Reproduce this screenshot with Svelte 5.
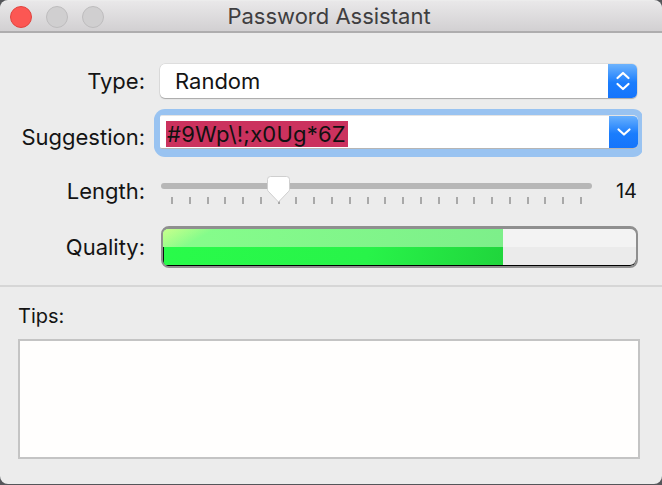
<script>
  const ticks = Array.from({ length: 24 }, (_, i) => i);
</script>

<div class="window">
  <header class="titlebar">
    <div class="lights">
      <span class="light red"></span>
      <span class="light"></span>
      <span class="light"></span>
    </div>
    <h1>Password Assistant</h1>
  </header>

  <section class="form">
    <label class="lbl type-l" for="t">Type:</label>
    <div class="select" id="t">
      <span class="value">Random</span>
      <span class="btn">
        <svg width="20" height="24" viewBox="0 0 20 24" fill="none" stroke="#fff" stroke-width="2.2" stroke-linecap="round" stroke-linejoin="round"><path d="M4.500 9 L10 4 L15.500 9"/><path d="M4.500 15 L10 20 L15.500 15"/></svg>
      </span>
    </div>

    <label class="lbl sug-l" for="s">Suggestion:</label>
    <div class="ring">
      <div class="combo" id="s">
        <span class="sel">#9Wp\!;x0Ug*6Z</span>
        <span class="btn">
          <svg width="20" height="14" viewBox="0 0 20 14" fill="none" stroke="#fff" stroke-width="2.2" stroke-linecap="round" stroke-linejoin="round"><path d="M4.500 4.500 L10 9.500 L15.500 4.500"/></svg>
        </span>
      </div>
    </div>

    <label class="lbl len-l" for="l">Length:</label>
    <div class="slider-row" id="l">
      <div class="slider">
        <div class="track"></div>
        <svg class="thumb" width="25" height="27" viewBox="0 0 25 27"><path d="M4.500 0.500 H20.500 Q23.500 0.500 23.500 3.500 V13.500 Q23.500 14.500 22.800 15.200 L12.500 26 L2.200 15.200 Q1.500 14.500 1.500 13.500 V3.500 Q1.500 0.500 4.500 0.500 Z" fill="#fff" stroke="#cfcfcf" stroke-width="1"/></svg>
        <div class="ticks">
          {#each ticks as t (t)}<i></i>{/each}
        </div>
      </div>
      <span class="num">14</span>
    </div>

    <label class="lbl qual-l" for="q">Quality:</label>
    <div class="meter" id="q">
      <div class="fill"></div>
    </div>
  </section>

  <hr />

  <section class="tips">
    <div class="tips-l">Tips:</div>
    <div class="tips-box"></div>
  </section>
</div>

<style>
  :global(body) {
    margin: 0;
    background: #55565a;
  }
  .window {
    width: 662px;
    height: 484px;
    box-sizing: border-box;
    padding-top: 1px;
    background: #ececec;
    border-radius: 8px;
    overflow: hidden;
    display: flex;
    flex-direction: column;
    font-family: Inter, "Liberation Sans", sans-serif;
    font-size: 22px;
    color: #141414;
  }
  .titlebar {
    height: 32px;
    flex: none;
    box-sizing: border-box;
    position: relative;
    display: flex;
    align-items: center;
    justify-content: center;
    background: linear-gradient(#e9e8e9, #d2d0d2);
    border-bottom: 2px solid #aeadae;
    border-radius: 8px 8px 0 0;
  }
  .lights {
    position: absolute;
    left: 10px;
    top: 5px;
    display: flex;
    gap: 14px;
  }
  .light {
    width: 20px;
    height: 20px;
    border-radius: 50%;
    background: #d0cfd0;
    border: 1px solid #bdbcbd;
  }
  .light.red {
    background: #fc5753;
    border-color: #e0443e;
  }
  h1 {
    margin: 0;
    padding-right: 4px;
    font-size: 22px;
    font-weight: 400;
    color: #3f3e40;
    line-height: 1;
  }
  .form {
    display: grid;
    grid-template-columns: 145px 478px;
    column-gap: 15px;
    align-items: start;
    padding-top: 31px;
    grid-template-rows: 51px 61px 50px 42px;
  }
  .lbl {
    text-align: right;
    line-height: 34px;
  }
  .sug-l {
    margin-top: 5px;
  }
  .len-l {
    margin-top: -2px;
  }
  .qual-l {
    margin-top: 4px;
  }
  .select,
  .combo {
    display: flex;
    height: 34px;
    box-sizing: border-box;
    background: #fff;
    border-radius: 5px;
    overflow: hidden;
    align-items: stretch;
    justify-content: space-between;
  }
  .select {
    width: 477px;
    box-shadow: 0 1px 1px #a9a9a9, 0 0 0 0.5px #d0d0d0;
  }
  .value {
    padding-left: 15px;
    line-height: 34px;
  }
  .btn {
    width: 29px;
    flex: none;
    display: flex;
    align-items: center;
    justify-content: center;
    background: linear-gradient(#6db3fd, #1a7dfd 55%, #1574fb);
  }
  .ring {
    width: 478px;
    height: 34px;
    border-radius: 5px;
    background: #99c3f1;
    box-shadow: 0 0 0 6px #99c3f1, 0 2px 0 6px #99c3f1;
    clip-path: inset(-6px -4px -8px -6px round 5px);
  }
  .combo {
    border-bottom: 1px solid #b5b5b5;
    border-top: 1px solid #e4e4e4;
    padding-left: 6px;
    border-radius: 2px 5px 5px 2px;
  }
  .combo .btn {
    margin-top: -1px;
    margin-bottom: -1px;
    border-radius: 0 5px 5px 0;
  }
  .sel {
    background: #cb325e;
    color: #111;
    height: 26px;
    margin-top: 5px;
    line-height: 26px;
    padding: 0 2px 0 1px;
    letter-spacing: 0.2px;
  }
  .slider-row {
    display: flex;
    align-items: flex-start;
    height: 40px;
  }
  .slider {
    position: relative;
    width: 431px;
    margin-left: 1px;
    padding-top: 7px;
  }
  .track {
    height: 6px;
    border-radius: 3px;
    background: #b7b7b7;
  }
  .thumb {
    position: absolute;
    left: 105px;
    top: 0;
  }
  .ticks {
    display: flex;
    justify-content: space-between;
    margin: 8px 10px 0 10px;
  }
  .ticks i {
    width: 2px;
    height: 7px;
    background: #a9a9a9;
  }
  .num {
    margin-left: auto;
    margin-right: 1px;
    font-size: 20px;
    line-height: 31px;
  }
  .meter {
    position: relative;
    height: 42px;
    box-sizing: border-box;
    width: 477px;
    margin-left: 1px;
    border: solid #8f8f8f;
    border-width: 3px 2px 2px 2px;
    border-radius: 8px;
    overflow: hidden;
    background: linear-gradient(#f3f3f3 0 18px, #ebebeb 18px);
    box-shadow: inset 0 -1px 0 #000;
  }
  .fill {
    width: 340px;
    height: 100%;
    box-sizing: border-box;
    border-bottom: 1px solid #000;
    background:
      linear-gradient(#111, #111) no-repeat 0 18px / 1px 18px,
      linear-gradient(150deg, #c9ff8c 0, rgba(201, 255, 140, 0) 26px) no-repeat 0 0 / 100% 18px,
      linear-gradient(90deg, #86fe8b, #7def8a) no-repeat 0 0 / 100% 18px,
      linear-gradient(100deg, #29fb4a, #28f349 60%, #20d53c) no-repeat 0 18px / 100% 18px;
  }
  hr {
    margin: 17px 0 0 0;
    border: 0;
    height: 2px;
    background: #d6d6d6;
  }
  .tips {
    padding: 17px 22px 0 18px;
  }
  .tips-l {
    line-height: 24px;
    font-size: 20px;
    margin-bottom: 11px;
  }
  .tips-box {
    height: 120px;
    box-sizing: border-box;
    background: #fffefd;
    border: 2px solid #c4c4c4;
  }
</style>
